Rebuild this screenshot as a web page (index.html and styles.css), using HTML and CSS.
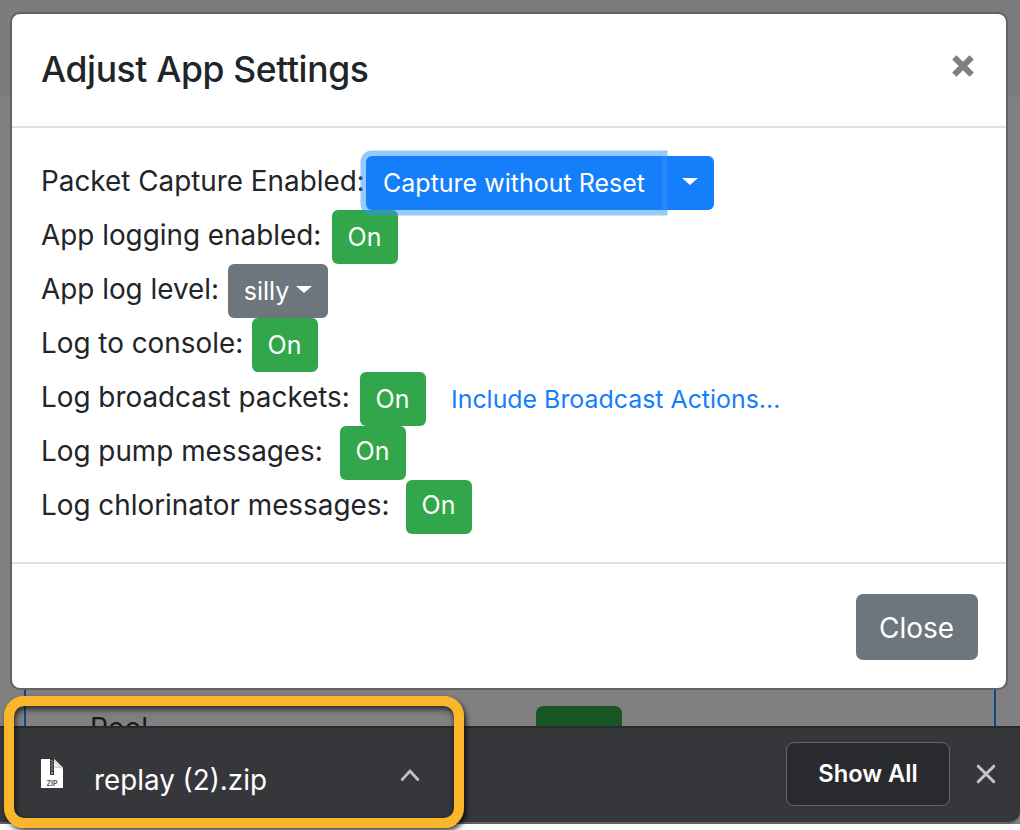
FILE: index.html
```html
<!DOCTYPE html>
<html lang="en">
<head>
<meta charset="utf-8">
<title>Adjust App Settings</title>
<link rel="stylesheet" href="styles.css">
</head>
<body>
<div class="window">
  <section class="modal">
    <header class="modal-header">
      <h1 class="title">Adjust App Settings</h1>
      <svg class="dismiss" width="22" height="22" viewBox="0 0 22 22"><path d="M2.3 2.3L19.7 19.7M19.7 2.3L2.3 19.7" stroke="#7f7f7f" stroke-width="6"/></svg>
    </header>
    <div class="modal-body">
      <div class="row"><span class="label label-capture">Packet Capture Enabled:</span><div class="group"><button class="btn primary focus">Capture without Reset</button><button class="btn primary split"><i class="caret"></i></button></div></div>
      <div class="row"><span class="label label-logging">App logging enabled:</span><button class="btn success">On</button></div>
      <div class="row"><span class="label label-level">App log level:</span><button class="btn secondary level">silly<i class="caret"></i></button></div>
      <div class="row"><span class="label label-console">Log to console:</span><button class="btn success">On</button></div>
      <div class="row"><span class="label label-broadcast">Log broadcast packets:</span><button class="btn success">On</button><a class="link">Include Broadcast Actions...</a></div>
      <div class="row"><span class="label label-pump">Log pump messages:</span><button class="btn success raised">On</button></div>
      <div class="row"><span class="label label-chlor">Log chlorinator messages:</span><button class="btn success raised">On</button></div>
    </div>
    <footer class="modal-footer"><button class="btn secondary close">Close</button></footer>
  </section>
  <div class="page-peek"><span class="pool">Pool</span><span class="pool-btn"></span></div>
  <div class="shelf">
    <svg class="zip" width="24" height="31" viewBox="0 0 24 31">
      <defs><linearGradient id="fold" x1="0" y1="1" x2="1" y2="0"><stop offset="0" stop-color="#fff"/><stop offset="1" stop-color="#aaa"/></linearGradient></defs>
      <path d="M1 1H14L23 10V30H1Z" fill="#fff"/>
      <path d="M14 1V9.5H23Z" fill="url(#fold)"/>
      <path d="M14 9L23 10" stroke="#c4c4c4" fill="none"/>
      <path d="M10 1H14V17H10Z" fill="#333"/>
      <path d="M11.3 2V13M12.8 3.2V13" stroke="#ccc" stroke-width="1" stroke-dasharray="1 1.6"/>
      <path d="M11.5 14H12.7V16H11.5Z" fill="#ddd"/>
      <text x="12" y="27.5" text-anchor="middle" class="zip-text">ZIP</text>
    </svg>
    <span class="file">replay (2).zip</span>
    <svg class="chevron" width="20" height="14" viewBox="0 0 20 14"><path d="M2.2 11.5L10 3L17.8 11.5" fill="none" stroke="#bfc0c2" stroke-width="2.8" stroke-linecap="round"/></svg>
    <button class="show-all">Show All</button>
    <svg class="shelf-x" width="20" height="20" viewBox="0 0 20 20"><path d="M2.2 2.2L17.8 17.8M17.8 2.2L2.2 17.8" stroke="#c4c5c7" stroke-width="3" stroke-linecap="round"/></svg>
  </div>
</div>
<div class="highlight"></div>
</body>
</html>
```
FILE: styles.css
```css
* { box-sizing: border-box; }
body { margin: 0; width: 1020px; height: 830px; overflow: hidden; background: #fff; color: #212529; font-family: Inter, "Liberation Sans", sans-serif; font-size: 27.85px; }
button { font: inherit; margin: 0; padding: 0; border: 0; }
span, a, button { white-space: nowrap; }
.window { width: 1020px; height: 824px; background: linear-gradient(#7c7c7c 0 97px, #808080 97px); display: flex; flex-direction: column; padding-top: 12px; }
.modal { width: 998px; height: 678px; margin-left: 10px; border: 2px solid #626262; border-radius: 10px; background: #fff; flex: none; display: flex; flex-direction: column; position: relative; z-index: 1; }
.modal-header { height: 114px; border-bottom: 2px solid #dee2e6; display: flex; justify-content: space-between; padding: 0 32px 0 29px; }
.title { margin: 33px 0 0; font-size: 35.5px; line-height: 46px; font-weight: 500; letter-spacing: -.38px; }
.dismiss { margin-top: 41px; }
.modal-body { height: 436px; padding: 28px 29px; border-bottom: 2px solid #dee2e6; }
.row { height: 54px; display: flex; }
.label { line-height: 50px; flex: none; }
.label-capture { width: 325px; }
.label-logging { width: 291px; }
.label-level { width: 187px; }
.label-console { width: 211px; }
.label-broadcast { width: 319px; }
.label-pump { width: 299px; }
.label-chlor { width: 365px; }
.btn { height: 54px; border-radius: 6px; color: #fff; font-size: 25px; font-weight: 440; line-height: 54px; display: flex; align-items: center; justify-content: center; flex: none; }
.group { display: flex; }
.primary { background: #157efb; }
.focus { width: 296px; border-radius: 6px 0 0 6px; box-shadow: 0 0 0 5.5px rgba(51, 146, 252, .5); position: relative; z-index: 2; }
.split { width: 52px; border-radius: 0 6px 6px 0; }
.split .caret { margin: 0 0 4px 3px; }
.caret { border: 8px solid transparent; border-top: 7px solid #fff; border-bottom: 0; }
.success { width: 66px; padding-right: 1px; background: #31a64a; }
.raised { line-height: 50px; padding-bottom: 4px; }
.secondary { background: #6d757d; }
.level { width: 100px; gap: 7px; }
.level .caret { margin-bottom: 4px; }
.link { margin-left: 25px; color: #157efb; font-size: 24.9px; line-height: 54px; }
.modal-footer { display: flex; justify-content: flex-end; padding: 30px 28px 0 0; }
.close { width: 122px; height: 66px; padding: 2px 1px 0 0; font-size: 28px; line-height: 66px; border-radius: 7px; }
.page-peek { height: 38px; margin: -2px 24px 0; border: 2px solid #0d478a; border-width: 0 2px; overflow: hidden; display: flex; flex: none; color: #171819; }
.pool { width: 510px; padding: 22px 0 0 64px; line-height: 36px; font-size: 28px; }
.pool-btn { width: 86px; height: 30px; margin-top: 18px; border-radius: 7px; background: #185524; }
.shelf { height: 98px; flex: none; background: #36373a; border-top: 2px solid #29292b; border-bottom: 2px solid #606164; border-bottom-right-radius: 12px; display: flex; color: #fff; }
.zip { margin: 30px 0 0 40px; }
.zip-text { font: 600 7px Inter, sans-serif; fill: #444; }
.file { width: 306px; margin-left: 30px; line-height: 105px; font-size: 27.8px; font-weight: 440; }
.chevron { margin-top: 40px; }
.show-all { width: 164px; height: 64px; margin: 14px 0 0 366px; border: 1px solid #65666a; border-radius: 8px; background: #292a2d; color: #fff; font-size: 23.7px; font-weight: 600; line-height: 60px; }
.shelf-x { margin: 36px 0 0 26px; }
.highlight { position: absolute; z-index: 3; left: 4px; top: 696px; width: 460px; height: 132px; border: 10px solid #fbb72b; border-radius: 20px; box-shadow: 2px 3px 5px rgba(0, 0, 0, .75), inset 1px 3px 6px rgba(0, 0, 0, .75); }
```
